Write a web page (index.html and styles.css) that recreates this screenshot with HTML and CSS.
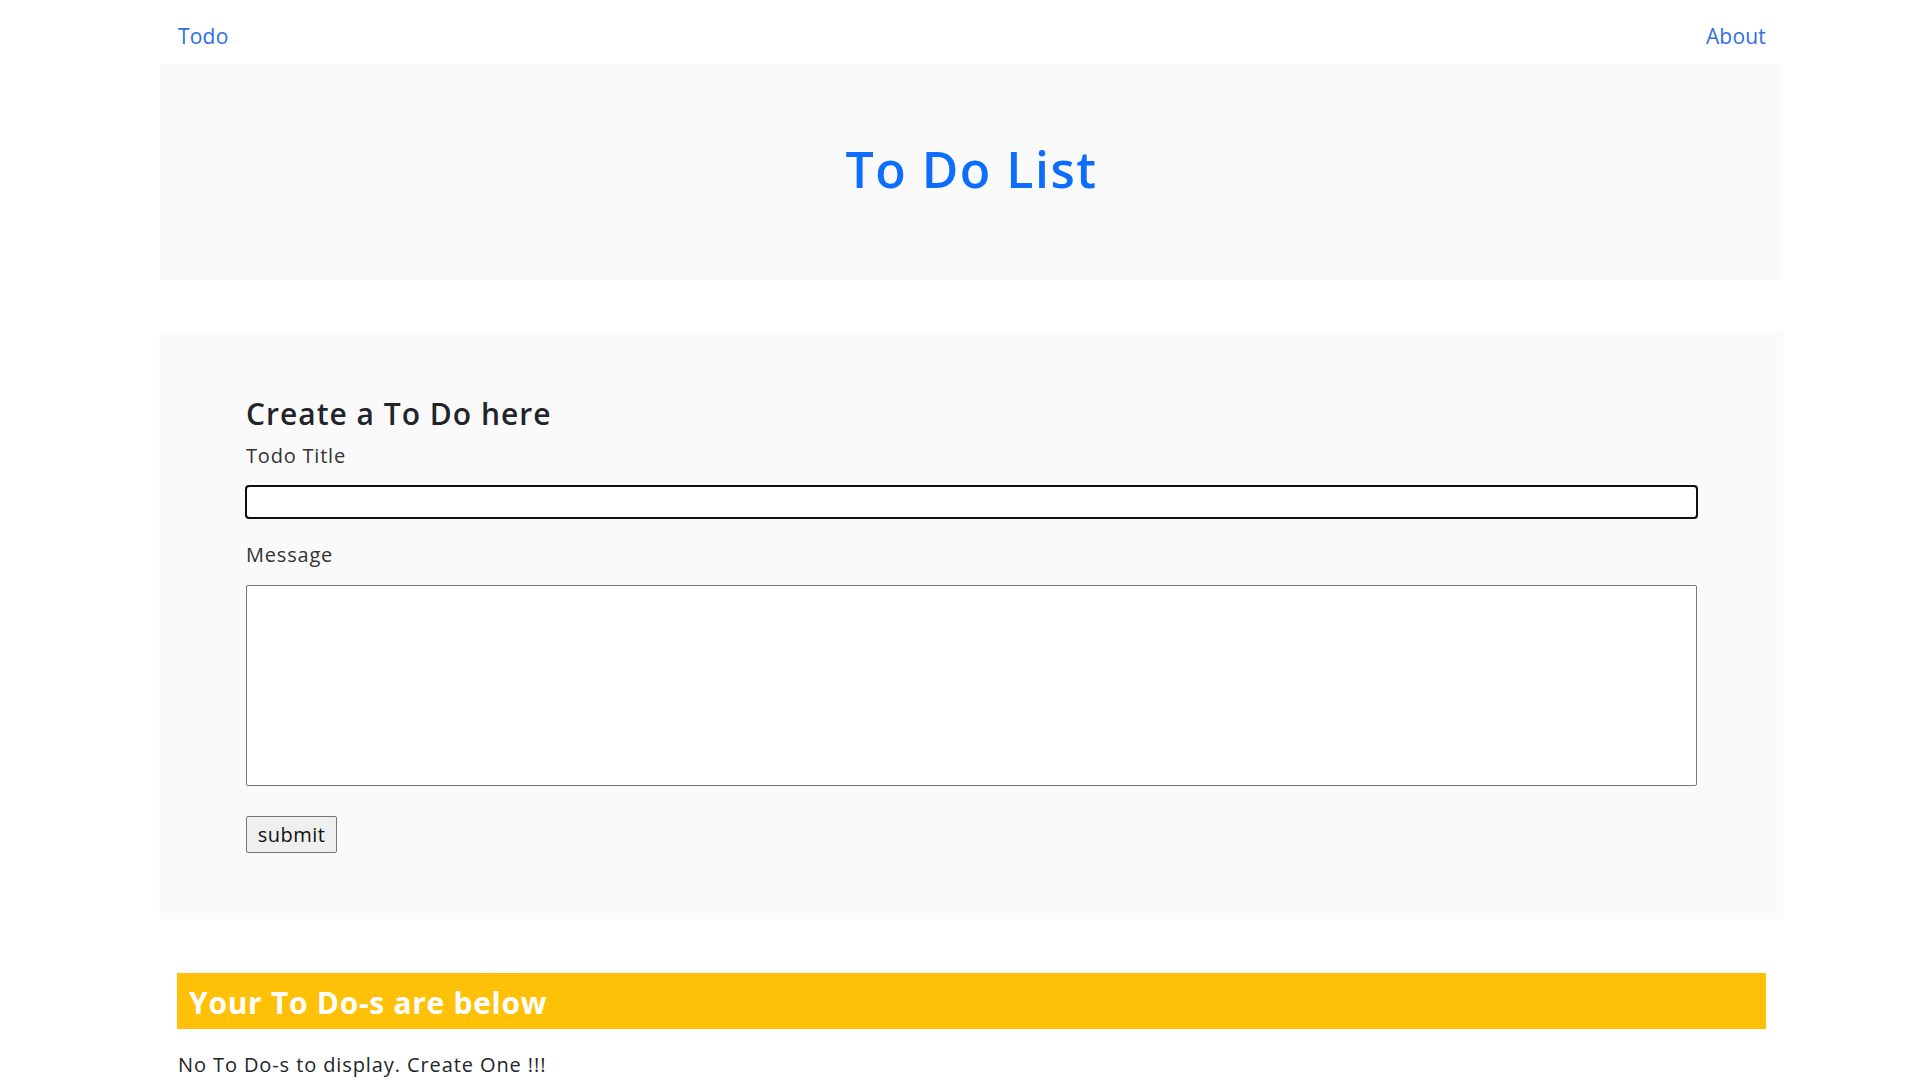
FILE: index.html
```html
<!DOCTYPE html>
<html lang="en">
<head>
    <meta charset="UTF-8">
    <meta name="viewport" content="width=device-width, initial-scale=1.0">
    <title>To Do List</title>
    <link rel="stylesheet" href="styles.css">
</head>
<body>

    <div class="page">
        <nav class="topbar">
            <a href="#" class="nav-link">Todo</a>
            <a href="#" class="nav-link">About</a>
        </nav>

        <header class="jumbo">
            <h1 class="jumbo-title">To Do List</h1>
        </header>

        <section class="form-box">
            <h2 class="form-heading">Create a To Do here</h2>
            <form class="todo-form">
                <label class="field-label label-title" for="title">Todo Title</label>
                <input class="field-input" type="text" id="title">

                <label class="field-label label-message" for="message">Message</label>
                <textarea class="field-area" id="message"></textarea>

                <button class="submit-btn" type="button">submit</button>
            </form>
        </section>

        <div class="list-bar">Your To Do-s are below</div>
        <p class="empty-note">No To Do-s to display. Create One !!!</p>
    </div>

</body>
</html>
```

FILE: styles.css
```css
* {
    margin: 0;
    padding: 0;
    box-sizing: border-box;
}

body {
    font-family: 'Open Sans', 'Noto Sans', sans-serif;
    font-size: 20px;
    line-height: 1.5;
    color: #212529;
    background: #ffffff;
}

.page {
    margin: 0 137px 0 160px;
}

/* Top navigation */
.topbar {
    display: flex;
    justify-content: space-between;
    align-items: center;
    height: 64px;
    padding: 9px 17px 0 18px;
}

.nav-link {
    color: #2f6fe0;
    text-decoration: none;
    font-size: 21px;
    letter-spacing: 0.2px;
}

/* Header block */
.jumbo {
    height: 216px;
    background: #fafafa;
    display: flex;
    align-items: center;
    justify-content: center;
}

.jumbo-title {
    color: #0d6efd;
    font-size: 50px;
    font-weight: 600;
    line-height: 1.2;
    letter-spacing: 1.5px;
    margin-top: -7px;
}

/* Form */
.form-box {
    margin-top: 53px;
    height: 586px;
    background: #fafafa;
    box-shadow: 0 -2px 4px rgba(0, 0, 0, 0.02);
    padding: 63px 86px 0 86px;
}

.form-heading {
    font-size: 30px;
    font-weight: 600;
    line-height: 36px;
    letter-spacing: 1px;
    color: #212529;
}

.todo-form {
    display: flex;
    flex-direction: column;
    align-items: flex-start;
}

.field-label {
    font-size: 20px;
    line-height: 30px;
    letter-spacing: 0.8px;
    color: #333;
}

.label-title {
    margin-top: 9px;
}

.field-input {
    width: 100%;
    height: 32px;
    margin-top: 15px;
    background: #ffffff;
    border: 1px solid #767676;
    border-radius: 3px;
    outline: 2px solid #101010;
    outline-offset: -1px;
    font: inherit;
}

.label-message {
    margin-top: 22px;
}

.field-area {
    width: 100%;
    height: 201px;
    margin-top: 15px;
    background: #ffffff;
    border: 1px solid #767676;
    border-radius: 2px;
    resize: none;
    font: inherit;
}

.submit-btn {
    margin-top: 30px;
    width: 91px;
    height: 37px;
    background: #efefef;
    border: 1px solid #767676;
    border-radius: 2px;
    font-family: inherit;
    font-size: 20px;
    letter-spacing: 0.5px;
    color: #111;
}

/* List */
.list-bar {
    display: flex;
    align-items: center;
    margin: 54px 17px 0 17px;
    height: 56px;
    padding: 4px 0 0 12px;
    background: #ffc107;
    color: #ffffff;
    font-size: 30px;
    font-weight: 700;
    line-height: 1.2;
    letter-spacing: 0.7px;
}

.empty-note {
    margin: 21px 17px 0 18px;
    font-size: 20px;
    line-height: 30px;
    letter-spacing: 0.9px;
    color: #212529;
}
```
